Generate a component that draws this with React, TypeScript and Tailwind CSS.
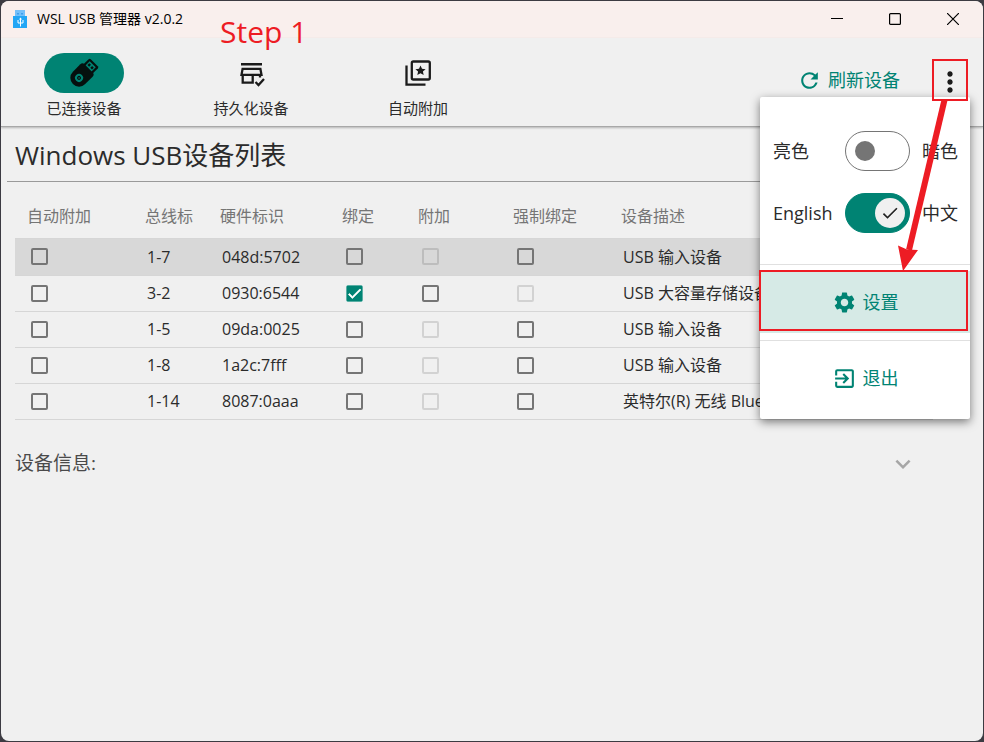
import type { ReactNode } from "react";
import { MdRefresh, MdMoreVert, MdSettings, MdExitToApp, MdKeyboardArrowDown, MdCheck } from "react-icons/md";

type Box = "off" | "on" | "disabled";

interface Device {
  bus: string;
  hwid: string;
  bind: Box;
  attach: Box;
  force: Box;
  description: string;
  selected?: boolean;
}

const devices: Device[] = [
  { bus: "1-7", hwid: "048d:5702", bind: "off", attach: "disabled", force: "off", description: "USB 输入设备", selected: true },
  { bus: "3-2", hwid: "0930:6544", bind: "on", attach: "off", force: "disabled", description: "USB 大容量存储设备" },
  { bus: "1-5", hwid: "09da:0025", bind: "off", attach: "disabled", force: "off", description: "USB 输入设备" },
  { bus: "1-8", hwid: "1a2c:7fff", bind: "off", attach: "disabled", force: "off", description: "USB 输入设备" },
  { bus: "1-14", hwid: "8087:0aaa", bind: "off", attach: "disabled", force: "off", description: "英特尔(R) 无线 Bluetooth(R)" },
];

function AppLogo() {
  return (
    <svg className="h-[18px] w-[14px]" viewBox="0 0 14 18" aria-hidden="true">
      <path d="M2 0h10v6H2z" fill="#74c0fa" />
      <path d="M4 3h2v1.500H4zM8 3h2v1.500H8z" fill="#3f9fee" />
      <path d="M0 6h14v12H0z" fill="#23a6f5" />
      <path d="M7.500 8v8.500M5 10v3h5v-3" fill="none" stroke="#fff" />
      <path d="M7.500 7.500l1.500 2H6z" fill="#fff" />
    </svg>
  );
}

function FlashDriveIcon() {
  return (
    <svg className="size-8" viewBox="0 0 32 32" aria-hidden="true">
      <g transform="translate(16 16) rotate(45)">
        <path d="M-5-14.500H5a1.500 1.500 0 0 1 1.500 1.500V-5h-13v-8a1.500 1.500 0 0 1 1.500-1.500z" fill="#05100e" />
        <path d="M-4.300-12.300h8.600v6.300h-8.600z" fill="#008373" />
        <path d="M-3.200-10.700h2.400v2.600h-2.400zM.8-10.700h2.400v2.600H.8z" fill="#05100e" />
        <path d="M-8.700-3.500q0-3 3-3H5.700q3 0 3 3V7a8.700 8.700 0 0 1-17.400 0z" fill="#05100e" />
        <circle cx="0" cy="7" r="3" fill="none" stroke="#008373" strokeWidth="2" />
        <circle cx="0" cy="7" r=".8" fill="#008373" />
      </g>
    </svg>
  );
}

function StoreCheckIcon() {
  return (
    <svg className="size-8" viewBox="0 0 32 32" fill="none" stroke="#1b1b1b" strokeWidth="2.300" aria-hidden="true">
      <path d="M6 7.200h21" strokeWidth="2.600" />
      <path d="M7.600 11.800h17.800l1.100 6H6.500z" />
      <path d="M7.700 17.500v8.200h10v-8.200" />
      <path d="M25 17.500v3" />
      <path d="M20.500 25l3 3 5.500-6" />
    </svg>
  );
}

function StarBoxesIcon() {
  return (
    <svg className="size-8" viewBox="0 0 32 32" fill="none" stroke="#1b1b1b" strokeWidth="2.300" aria-hidden="true">
      <rect x="9.800" y="4.500" width="18" height="18" rx="1.500" />
      <path d="M4.500 8.500v19.200H23.500" />
      <path d="M18.500 8.500l1.500 3.300 3.600.4-2.700 2.400.8 3.500-3.200-1.800-3.200 1.800.8-3.500-2.700-2.400 3.600-.4z" fill="#1b1b1b" stroke="none" />
    </svg>
  );
}

function NavItem({ icon, label, active = false }: { icon: ReactNode; label: string; active?: boolean }) {
  return (
    <button type="button" className="flex w-[166px] flex-col items-center gap-1">
      <span className={`flex h-10 w-20 items-center justify-center rounded-full ${active ? "bg-[#008373]" : ""}`}>{icon}</span>
      <span className="text-[15px] leading-[22px]">{label}</span>
    </button>
  );
}

function CheckCell({ state, label }: { state: Box; label: string }) {
  return (
    <td className="pl-4">
      <span className="relative block size-[17px]">
        <input
          type="checkbox"
          aria-label={label}
          defaultChecked={state === "on"}
          disabled={state === "disabled"}
          className="peer block size-[17px] appearance-none rounded-[2px] border-2 border-[#757575] checked:border-[#008373] checked:bg-[#008373] disabled:border-black/12"
        />
        <MdCheck className="pointer-events-none absolute inset-0 hidden size-[17px] stroke-white stroke-1 text-white peer-checked:block" />
      </span>
    </td>
  );
}

function SwitchRow({ left, right, on = false }: { left: string; right: string; on?: boolean }) {
  return (
    <label className="flex h-10 items-center">
      <span className="w-[72px]">{left}</span>
      <span className="relative h-10 w-[65px]">
        <input
          type="checkbox"
          role="switch"
          defaultChecked={on}
          className="peer block h-10 w-[65px] appearance-none rounded-full border border-[#757575] checked:border-[#008373] checked:bg-[#008373]"
        />
        <span className="pointer-events-none absolute top-[10px] left-[10px] size-5 rounded-full bg-[#757575] peer-checked:hidden" />
        <span className="pointer-events-none absolute top-[5px] right-[5px] hidden size-[30px] items-center justify-center rounded-full bg-[#f0f0f0] text-[#222] peer-checked:flex">
          <MdCheck className="size-5" />
        </span>
      </span>
      <span className="ml-3">{right}</span>
    </label>
  );
}

function OverflowMenu() {
  return (
    <div className="absolute top-[38px] -right-[2px] z-10 w-[210px] rounded-[2px] bg-white text-lg leading-6 text-[#2b2b2b] shadow-[0_3px_10px_rgba(0,0,0,0.5)]">
      <div className="flex flex-col gap-[22px] pt-[34px] pb-[31px] pl-[13px]">
        <SwitchRow left="亮色" right="暗色" />
        <SwitchRow left="English" right="中文" on />
      </div>
      <div className="border-y border-[#e0e0e0] pt-[6px] pb-[7px]">
        <button type="button" className="flex h-[62px] w-full items-center justify-center gap-[6px] bg-[#d6eae6] text-[#008373]">
          <MdSettings className="size-[25px]" />
          设置
        </button>
      </div>
      <div className="pt-[6px] pb-[10px]">
        <button type="button" className="flex h-[62px] w-full items-center justify-center gap-[6px] text-[#008373]">
          <MdExitToApp className="size-[25px]" />
          退出
        </button>
      </div>
      {/* callout around the settings entry */}
      <div className="pointer-events-none absolute top-[173px] right-[2px] -left-px h-[61px] border-2 border-[#ed1c24]" />
      <svg className="pointer-events-none absolute top-0 right-0 h-[180px] w-[80px]" viewBox="0 0 80 180" aria-hidden="true">
        <path d="M54.500 3L19 153" stroke="#ed1c24" strokeWidth="6" fill="none" />
        <path d="M13 174L8 148.500L17 152.500L28 153z" fill="#ed1c24" />
      </svg>
    </div>
  );
}

function TitleBar() {
  return (
    <header className="flex h-[37px] shrink-0 items-center bg-[#f9efed] pr-px pb-[2px] pl-3 text-black">
      <AppLogo />
      <span className="ml-[10px] text-sm">WSL USB 管理器 v2.0.2</span>
      <div className="ml-auto flex h-full">
        <button type="button" aria-label="最小化" className="flex w-[58px] items-center justify-center">
          <svg className="size-3" viewBox="0 0 12 12" aria-hidden="true"><path d="M0 5.500h12" stroke="#000" /></svg>
        </button>
        <button type="button" aria-label="最大化" className="flex w-[58px] items-center justify-center">
          <svg className="size-3" viewBox="0 0 12 12" aria-hidden="true"><rect x=".6" y=".6" width="10.800" height="10.800" rx="1" fill="none" stroke="#000" strokeWidth="1.200" /></svg>
        </button>
        <button type="button" aria-label="关闭" className="flex w-[58px] items-center justify-center">
          <svg className="size-3" viewBox="0 0 12 12" aria-hidden="true"><path d="M0 0l12 12M12 0L0 12" stroke="#000" strokeWidth="1.200" /></svg>
        </button>
      </div>
    </header>
  );
}

export default function App() {
  return (
    <div className="h-screen bg-[#3c3b42] p-px font-['Open_Sans','Noto_Sans_CJK_SC',sans-serif] text-[#2b2b2b]">
      <div className="relative flex h-full flex-col overflow-hidden rounded-lg bg-[#f0f0f0]">
        <TitleBar />

        <div className="relative flex h-[89px] shrink-0 border-b border-[#a8a8a8] pt-[15px] shadow-[0_1px_2px_rgba(0,0,0,0.25)]">
          <nav className="flex items-start gap-px">
            <NavItem active icon={<FlashDriveIcon />} label="已连接设备" />
            <NavItem icon={<StoreCheckIcon />} label="持久化设备" />
            <NavItem icon={<StarBoxesIcon />} label="自动附加" />
          </nav>
          <div className="mr-[15px] ml-auto flex items-start pt-[6px]">
            <button type="button" className="mr-8 flex h-[42px] items-center gap-[6px] text-lg text-[#008373]">
              <MdRefresh className="size-[25px]" />
              刷新设备
            </button>
            <div className="relative">
              <button type="button" aria-label="更多" className="flex h-[42px] w-9 items-center justify-center pt-[3px] text-[#1b1b1b]">
                <MdMoreVert className="size-8 shrink-0" />
              </button>
              <OverflowMenu />
              {/* callout around the menu button */}
              <div className="pointer-events-none absolute inset-0 z-20 border-2 border-[#ed1c24]" />
            </div>
          </div>
        </div>

        <main className="pr-[50px] pl-[6px]">
          <h1 className="border-b border-[#9a9a9a] pt-[10px] pb-[8px] pl-2 text-[26px] leading-9">Windows USB设备列表</h1>
          <div className="pl-2">
            <table className="w-full table-fixed border-collapse text-left text-base whitespace-nowrap">
              <thead className="text-[#757575]">
                <tr className="h-14 border-b border-[#d6d6d6]">
                  <th className="w-[118px] pt-3 pl-3 font-normal">自动附加</th>
                  <th className="w-[75px] pt-3 pl-3 font-normal">总线标</th>
                  <th className="w-[122px] pt-3 pl-3 font-normal">硬件标识</th>
                  <th className="w-[76px] pt-3 pl-3 font-normal">绑定</th>
                  <th className="w-[95px] pt-3 pl-3 font-normal">附加</th>
                  <th className="w-[108px] pt-3 pl-3 font-normal">强制绑定</th>
                  <th className="pt-3 pl-3 font-normal">设备描述</th>
                </tr>
              </thead>
              <tbody>
                {devices.map((d) => (
                  <tr key={d.bus} className={`border-b border-[#d6d6d6] ${d.selected ? "h-[37px] bg-[#d8d8d8]" : "h-9"}`}>
                    <CheckCell state="off" label={`自动附加 ${d.bus}`} />
                    <td className="pl-[14px]">{d.bus}</td>
                    <td className="pl-[14px]">{d.hwid}</td>
                    <CheckCell state={d.bind} label={`绑定 ${d.bus}`} />
                    <CheckCell state={d.attach} label={`附加 ${d.bus}`} />
                    <CheckCell state={d.force} label={`强制绑定 ${d.bus}`} />
                    <td className="overflow-hidden pl-[14px]">{d.description}</td>
                  </tr>
                ))}
              </tbody>
            </table>
            <button type="button" className="mt-7 flex h-8 w-full items-center justify-between pr-[15px] text-[19px] text-[#4a4a4a]">
              设备信息:
              <MdKeyboardArrowDown className="size-[30px] text-[#a6a6a6]" />
            </button>
          </div>
        </main>

        {/* step annotation floating over the window */}
        <span className="pointer-events-none absolute top-[11px] left-[219px] text-[30px] leading-10 text-[#ed1c24]">Step 1</span>
      </div>
    </div>
  );
}
